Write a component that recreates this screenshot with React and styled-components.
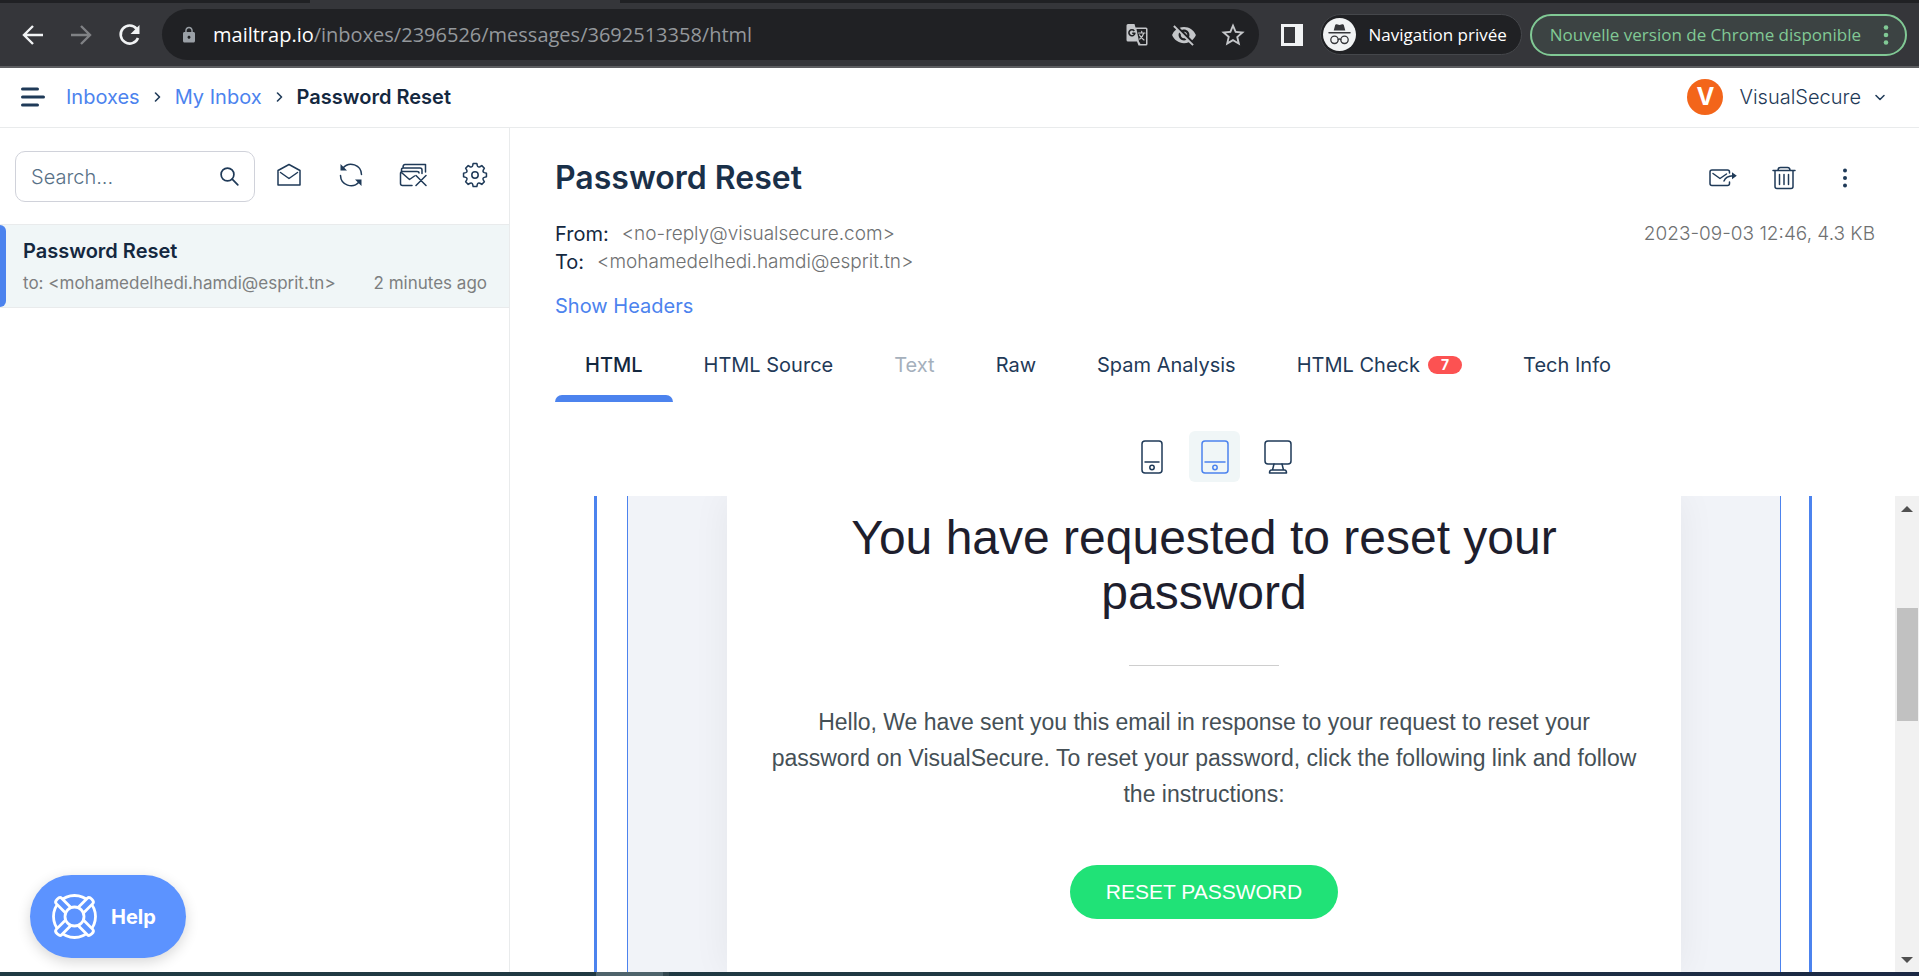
import React from "react";
import styled, { createGlobalStyle, css } from "styled-components";
import { MdLock, MdVisibilityOff, MdStarOutline } from "react-icons/md";

const ui = `Inter, "Liberation Sans", sans-serif`;
const chromeFont = `"Open Sans", "Noto Sans", sans-serif`;
const mailFont = `"Liberation Sans", Arial, sans-serif`;
const navy = "#1f3a58";
const ink = "#14283f";
const blue = "#4c83ee";
const line = "#e9ebec";
const muted = "#7d7f80";

const Global = createGlobalStyle`
  *, *::before, *::after { box-sizing: border-box; }
  body { margin: 0; background: #fff; font-family: ${ui}; color: ${navy}; }
  button { font: inherit; color: inherit; border: 0; background: none; padding: 0; cursor: pointer; }
  a { text-decoration: none; color: ${blue}; }
  svg { display: block; flex: none; }
`;

const Window = styled.div`
  height: 100vh;
  display: flex;
  flex-direction: column;
  overflow: hidden;
`;

/* Browser */
const TabStrip = styled.div`
  flex: none;
  height: 3px;
  display: flex;
  background: #202124;
`;
const ActiveTab = styled.div`
  width: 310px;
  margin-left: 310px;
  background: #35363a;
`;
const BrowserBar = styled.div`
  flex: none;
  height: 65px;
  display: flex;
  align-items: center;
  padding: 0 12px 0 21px;
  background: #35363a;
  border-bottom: 2px solid #5d5e61;
  font-family: ${chromeFont};
`;
const NavButtons = styled.div`
  display: flex;
  gap: 24px;
  margin-right: 21px;
`;
const NavButton = styled.button`
  color: ${(p) => (p.disabled ? "#808285" : "#f1f3f4")};
`;
const Omnibox = styled.div`
  flex: 1;
  min-width: 0;
  height: 51px;
  display: flex;
  align-items: center;
  padding: 0 12px 0 18px;
  border-radius: 26px;
  background: #202124;
  color: #9aa0a6;
`;
const Address = styled.div`
  flex: 1;
  min-width: 0;
  margin-left: 15px;
  font-size: 20px;
  line-height: 28px;
  white-space: nowrap;
  overflow: hidden;
  color: #94989c;
  b { font-weight: 400; color: #fff; }
`;
const OmniActions = styled.div`
  display: flex;
  align-items: center;
  gap: 22px;
  color: #c4c6c9;
`;
const PanelButton = styled.button`
  width: 22px;
  height: 22px;
  margin: 0 17px 0 22px;
  border: solid #f1f3f4;
  border-width: 3px 8px 3px 3px;
`;
const Incognito = styled.div`
  height: 41px;
  display: flex;
  align-items: center;
  gap: 12px;
  padding: 0 14px 0 2px;
  margin-right: 8px;
  border: 1px solid #45474b;
  border-radius: 21px;
  background: #202124;
  color: #fff;
  font-size: 17px;
  line-height: 24px;
  white-space: nowrap;
`;
const UpdateButton = styled.button`
  height: 42px;
  display: flex;
  align-items: center;
  gap: 22px;
  padding: 0 16px 0 18px;
  border: 2px solid #81c995;
  border-radius: 21px;
  background: #3c4343;
  color: #81c995;
  font-size: 17px;
  line-height: 24px;
  white-space: nowrap;
`;

/* App header */
const Header = styled.header`
  flex: none;
  height: 60px;
  display: flex;
  align-items: center;
  padding: 0 34px 1px 20px;
  border-bottom: 1px solid ${line};
  font-size: 20px;
  line-height: 28px;
`;
const Crumbs = styled.nav`
  display: flex;
  align-items: center;
  gap: 14px;
  margin-left: 20px;
  strong { font-weight: 600; color: ${ink}; }
`;
const Account = styled.button`
  display: flex;
  align-items: center;
  margin-left: auto;
`;
const Avatar = styled.span`
  width: 36px;
  height: 36px;
  display: grid;
  place-items: center;
  margin-right: 16px;
  border-radius: 50%;
  background: #f3651a;
  color: #fff;
  font-size: 24px;
  font-weight: 700;
`;
const AccountName = styled.span`
  margin-right: 14px;
  font-weight: 300;
`;

/* Layout */
const Body = styled.div`
  flex: 1;
  min-height: 0;
  display: flex;
`;
const Sidebar = styled.aside`
  flex: none;
  width: 510px;
  display: flex;
  flex-direction: column;
  border-right: 1px solid ${line};
`;
const Tools = styled.div`
  display: flex;
  gap: 20px;
  padding: 23px 20px 22px 15px;
`;
const ToolIcons = styled.div`
  display: flex;
  gap: 34px;
  padding-top: 10px;
`;
const ToolButton = styled.button`
  width: 28px;
  height: 28px;
  display: grid;
  place-items: center;
`;
const SearchBox = styled.label`
  flex: 1;
  min-width: 0;
  height: 51px;
  display: flex;
  align-items: center;
  padding: 0 15px;
  border: 1px solid #d0d2da;
  border-radius: 10px;
`;
const SearchInput = styled.input`
  flex: 1;
  min-width: 0;
  padding: 0;
  border: 0;
  outline: 0;
  background: none;
  font: 300 20px/28px ${ui};
  &::placeholder { color: #587187; opacity: 1; }
`;
const MessageRow = styled.div`
  display: flex;
  background: #f0f6f7;
  border: solid ${line};
  border-width: 1px 0;
`;
const MessageMark = styled.span`
  flex: none;
  width: 6px;
  border-radius: 0 6px 6px 0;
  background: ${blue};
`;
const MessageLink = styled.a`
  flex: 1;
  min-width: 0;
  padding: 12px 22px 11px 17px;
`;
const MessageTitle = styled.div`
  font-size: 20px;
  line-height: 28px;
  font-weight: 600;
  color: ${ink};
`;
const MessageMeta = styled.div`
  display: flex;
  justify-content: space-between;
  margin-top: 5px;
  font-size: 17px;
  line-height: 26px;
  color: ${muted};
`;
const HelpButton = styled.button`
  width: 156px;
  height: 83px;
  display: flex;
  align-items: center;
  gap: 14px;
  margin: auto 0 14px 30px;
  padding-left: 22px;
  border-radius: 42px;
  background: #5c93ff;
  box-shadow: 0 4px 14px rgba(0, 0, 0, 0.16);
  color: #fff;
  font-size: 20px;
  font-weight: 700;
`;

const Main = styled.main`
  flex: 1;
  min-width: 0;
  display: flex;
  flex-direction: column;
`;
const Details = styled.section`
  padding: 28px 44px 0 45px;
`;
const Spread = styled.div`
  display: flex;
  justify-content: space-between;
`;
const Title = styled.h1`
  margin: 0;
  font-size: 32px;
  line-height: 44px;
  font-weight: 600;
  color: #1a3049;
`;
const Actions = styled.div`
  display: flex;
  align-items: center;
  gap: 33px;
  padding-right: 16px;
`;
const Fields = styled.dl`
  margin: 20px 0 0;
  font-size: 20px;
  line-height: 28px;
`;
const Field = styled.div`
  display: flex;
  gap: 13px;
  dt { color: ${ink}; }
  dd { margin: 0; font-size: 19px; font-weight: 300; color: #6f7172; }
`;
const Stamp = styled.div`
  margin-top: 20px;
  font-size: 19px;
  line-height: 28px;
  font-weight: 300;
  color: #6f7172;
`;
const HeadersLink = styled.a`
  display: inline-block;
  margin-top: 16px;
  font-size: 20px;
  line-height: 28px;
`;
const Tabs = styled.nav`
  display: flex;
  gap: 1px;
  margin-top: 31px;
  padding-left: 45px;
`;
const Tab = styled.button`
  display: flex;
  align-items: center;
  gap: 8px;
  height: 44px;
  padding: 0 30px 16px;
  font-size: 20px;
  line-height: 28px;
  white-space: nowrap;
  color: ${navy};
  &:disabled { color: #a5b0bc; }
`;
const TabItem = styled.div`
  &::after {
    content: "";
    display: block;
    height: 7px;
    border-radius: 7px 7px 0 0;
    background: ${(p) => (p.$active ? blue : "transparent")};
  }
  ${(p) => p.$active && css`${Tab} { color: ${ink}; font-weight: 500; }`}
`;
const Badge = styled.span`
  padding: 0 13px;
  border-radius: 9px;
  background: #fc5252;
  color: #fff;
  font-size: 14px;
  line-height: 18px;
  font-weight: 700;
`;
const Devices = styled.div`
  display: flex;
  justify-content: center;
  gap: 12px;
  margin: 29px 0 14px;
`;
const Device = styled.button`
  width: 51px;
  height: 51px;
  display: grid;
  place-items: center;
  border-radius: 6px;
  color: ${(p) => (p.$active ? blue : navy)};
  background: ${(p) => (p.$active ? "#f0f6f7" : "none")};
`;

/* Mail preview */
const Preview = styled.section`
  flex: 1;
  min-height: 0;
  display: flex;
`;
const Viewport = styled.div`
  flex: 1;
  min-width: 0;
  display: flex;
  padding: 0 83px 0 84px;
`;
const Frame = styled.div`
  flex: 1;
  display: flex;
  padding: 0 28px 0 30px;
  border: solid ${blue};
  border-width: 0 3px;
`;
const MailPage = styled.div`
  flex: 1;
  display: flex;
  justify-content: center;
  overflow: hidden;
  border: solid ${blue};
  border-width: 0 1px;
  background: #f1f3f8;
`;
const MailCard = styled.article`
  width: 954px;
  padding: 14px 42px 0;
  background: #fff;
  box-shadow: 0 0 36px rgba(0, 0, 0, 0.06);
  font-family: ${mailFont};
  text-align: center;
`;
const MailTitle = styled.h2`
  margin: 0;
  font-size: 48px;
  line-height: 55px;
  font-weight: 400;
  color: #1e1e2d;
`;
const Rule = styled.hr`
  width: 150px;
  margin: 45px auto 38px;
  border: 0;
  border-top: 1px solid #cecece;
`;
const MailText = styled.p`
  margin: 0;
  font-size: 23px;
  line-height: 36px;
  color: #455056;
`;
const ResetLink = styled.a`
  display: inline-block;
  margin-top: 53px;
  padding: 0 36px;
  border-radius: 27px;
  background: #20e277;
  color: #fff;
  font-size: 21px;
  line-height: 54px;
`;
const Scrollbar = styled.div`
  flex: none;
  width: 24px;
  display: flex;
  flex-direction: column;
  align-items: center;
  padding: 10px 0 9px;
  background: #f1f1f1;
`;
const Thumb = styled.div`
  width: 21px;
  height: 113px;
  margin: 96px 0 auto;
  background: #c1c1c1;
`;
const Taskbar = styled.footer`
  flex: none;
  height: 4px;
  display: flex;
  background: linear-gradient(90deg, #203a43, #1f3842 50%, #1b2844);
`;
const TaskbarApp = styled.div`
  width: 73px;
  margin-left: 596px;
  border-right: 6px solid #33474f;
  background: #4e636b;
`;

function Icon({ w = 24, h = w, sw = 2, children, ...rest }) {
  return (
    <svg width={w} height={h} viewBox={`0 0 ${w} ${h}`} fill="none" stroke="currentColor"
      strokeWidth={sw} strokeLinecap="round" strokeLinejoin="round" aria-hidden="true" {...rest}>
      {children}
    </svg>
  );
}

const Chevron = () => (
  <Icon w={7} h={10} sw={1.6}><path d="M1.5 1 5.5 5l-4 4" /></Icon>
);

/* Eight-toothed gear outline, centred on (13, 13) */
const gearPath = (() => {
  const pts = [];
  for (let i = 0; i < 8; i += 1) {
    const a = (i * Math.PI) / 4;
    const p = (r, d) => `${(13 + r * Math.cos(a + d)).toFixed(2)} ${(13 + r * Math.sin(a + d)).toFixed(2)}`;
    pts.push(`${i ? "L" : "M"}${p(11.6, -0.16)}L${p(11.6, 0.16)}L${p(9.6, 0.25)}Q${p(8, 0.39)} ${p(9.6, 0.535)}`);
  }
  return `${pts.join("")}Z`;
})();

const tabs = [
  { label: "HTML", active: true },
  { label: "HTML Source" },
  { label: "Text", disabled: true },
  { label: "Raw" },
  { label: "Spam Analysis" },
  { label: "HTML Check", count: 7 },
  { label: "Tech Info" },
];

function TranslateIcon() {
  return (
    <Icon w={24} sw={1.5}>
      <path d="M3 1h6.500l1 3.500H21q1.500 0 1.500 1.500v15q0 1.500-1.500 1.500h-7.500L12 18.500H3Q1.500 18.500 1.500 17V2.500Q1.500 1 3 1z" fill="currentColor" stroke="none" />
      <path d="M11.500 6H21v15h-5.500l-1.500-2.500z" fill="#202124" stroke="none" />
      <path d="M9.300 7.900A3 3 0 1 0 9.900 10.200H7.200" stroke="#202124" strokeWidth="1.600" strokeLinecap="butt" />
      <path d="M13.500 10h6.500M16.700 8.300V10M18.800 10q-1 3.500-4 6M14.500 12q1.500 3 4.500 5" strokeWidth="1.200" />
    </Icon>
  );
}

function Browser() {
  return (
    <>
      <TabStrip><ActiveTab /></TabStrip>
      <BrowserBar>
        <NavButtons>
          <NavButton aria-label="Back"><Icon sw={2.4}><path d="M22 12H4M12 3 3 12l9 9" strokeLinecap="butt" strokeLinejoin="miter" /></Icon></NavButton>
          <NavButton aria-label="Forward" disabled><Icon sw={2.4}><path d="M2 12h18M12 3l9 9-9 9" strokeLinecap="butt" strokeLinejoin="miter" /></Icon></NavButton>
          <NavButton aria-label="Reload"><Icon sw={2.6}><path d="M19.600 5.800A9 9 0 1 0 21 15" strokeLinecap="butt" /><path d="M22.500 2v9h-9z" fill="currentColor" stroke="none" /></Icon></NavButton>
        </NavButtons>
        <Omnibox>
          <MdLock size={18} />
          <Address><b>mailtrap.io</b>/inboxes/2396526/messages/3692513358/html</Address>
          <OmniActions>
            <TranslateIcon />
            <MdVisibilityOff size={26} />
            <MdStarOutline size={28} />
          </OmniActions>
        </Omnibox>
        <PanelButton aria-label="Side panel" />
        <Incognito>
          <Icon w={33} stroke="none">
            <circle cx="16.500" cy="16.500" r="16.500" fill="#f1f3f4" />
            <path d="M12.200 7q.4-1 1.600-.7l2.700.8 2.700-.8q1.200-.3 1.600.7l1.500 5.500H10.700z" fill="#35363a" />
            <path d="M6 14.800h21" stroke="#35363a" strokeWidth="1.500" />
            <g stroke="#35363a" strokeWidth="1.300"><circle cx="11.500" cy="21.800" r="3.700" /><circle cx="21.500" cy="21.800" r="3.700" /><path d="M15.200 21.500q1.300-1 2.600 0" /></g>
          </Icon>
          Navigation privée
        </Incognito>
        <UpdateButton>
          Nouvelle version de Chrome disponible
          <Icon w={6} h={20} fill="currentColor" stroke="none"><circle cx="3" cy="2.500" r="2.300" /><circle cx="3" cy="10" r="2.300" /><circle cx="3" cy="17.500" r="2.300" /></Icon>
        </UpdateButton>
      </BrowserBar>
    </>
  );
}

function Tool({ label, children }) {
  return <ToolButton aria-label={label} title={label}>{children}</ToolButton>;
}

function SidePanel() {
  return (
    <Sidebar>
      <Tools>
        <SearchBox>
          <SearchInput placeholder="Search..." aria-label="Search" />
          <Icon w={19} sw={1.7}><circle cx="7.500" cy="7.500" r="6.400" /><path d="m12.200 12.200 5.600 5.600" /></Icon>
        </SearchBox>
        <ToolIcons>
          <Tool label="Mark all as read"><Icon w={26} sw={1.5}><path d="M2 8.500 13 2.500l11 6V23H2zM4.500 10.500l8.500 6 8.500-6" /></Icon></Tool>
          <Tool label="Refresh"><Icon w={26} sw={1.5}><path d="M5 6A10.500 10.500 0 0 1 23.500 12.500M21 20A10.500 10.500 0 0 1 2.500 13.500" /><path d="M2.500 2v6.500H9zM23.500 24v-6.500H17z" fill="currentColor" stroke="none" /></Icon></Tool>
          <Tool label="Delete all messages"><Icon w={28} h={24} sw={1.5}><path d="M13 22.500H3.500Q1.500 22.500 1.500 20.500V10.500Q1.500 8.500 3.500 8.500H18Q20 8.500 20 10M2.500 9.500l8 7 5-3.500M2.500 8V6.500Q2.500 5 4.500 5H21q2 0 2 2v3.500M4 4.500Q4 1.500 6 1.500H26.500V9M17 12.500l10 10M27 12.500l-10 10" /></Icon></Tool>
          <Tool label="Settings"><Icon w={26} sw={1.5}><path d={gearPath} /><circle cx="13" cy="13" r="3.200" /></Icon></Tool>
        </ToolIcons>
      </Tools>
      <MessageRow>
        <MessageMark />
        <MessageLink href="#message">
          <MessageTitle>Password Reset</MessageTitle>
          <MessageMeta><span>to: &lt;mohamedelhedi.hamdi@esprit.tn&gt;</span><span>2 minutes ago</span></MessageMeta>
        </MessageLink>
      </MessageRow>
      <HelpButton>
        <Icon w={45} sw={2.8} stroke="#fff">
          <circle cx="22.500" cy="22.500" r="21" />
          {[45, 135, 225, 315].map((r) => (
            <path key={r} transform={`rotate(${r} 22.500 22.500)`} fill="#5c93ff" d="M18.700 14V.500q0-2.500 3.800-2.500t3.800 2.500V14" />
          ))}
          <circle cx="22.500" cy="22.500" r="9.500" fill="#5c93ff" />
        </Icon>
        Help
      </HelpButton>
    </Sidebar>
  );
}

function MessageView() {
  return (
    <Main>
      <Details>
        <Spread>
          <Title>Password Reset</Title>
          <Actions>
            <Tool label="Forward"><Icon w={28} h={18} sw={1.5}><path d="M20.500 4V3Q20.500 1 18.500 1H3Q1 1 1 3v11.500q0 2 2 2h15.500q2 0 2-2V13M4 4.500l7 5 6.500-4.500M15 12q2-5 9-5.300" /><path d="m23 3.200 4.800 3.500L23 10.200z" fill="currentColor" stroke="none" /></Icon></Tool>
            <Tool label="Delete"><Icon w={24} sw={1.5}><path d="M1 4.500h22M6 4.500q0-3 2.500-3h7q2.500 0 2.500 3M3 4.500V20.500q0 2 2 2H19q2 0 2-2V4.500M7.500 8.500v10M12 8.500v10M16.500 8.500v10" /></Icon></Tool>
            <Tool label="More"><Icon w={4} h={20} fill="currentColor" stroke="none"><circle cx="2" cy="2.500" r="2" /><circle cx="2" cy="10" r="2" /><circle cx="2" cy="17.500" r="2" /></Icon></Tool>
          </Actions>
        </Spread>
        <Spread>
          <Fields>
            <Field><dt>From:</dt><dd>&lt;no-reply@visualsecure.com&gt;</dd></Field>
            <Field><dt>To:</dt><dd>&lt;mohamedelhedi.hamdi@esprit.tn&gt;</dd></Field>
          </Fields>
          <Stamp>2023-09-03 12:46, 4.3 KB</Stamp>
        </Spread>
        <HeadersLink href="#headers">Show Headers</HeadersLink>
      </Details>
      <Tabs>
        {tabs.map((t) => (
          <TabItem key={t.label} $active={t.active}>
            <Tab disabled={t.disabled}>{t.label}{t.count && <Badge>{t.count}</Badge>}</Tab>
          </TabItem>
        ))}
      </Tabs>
      <Devices>
        <Device aria-label="Phone"><Icon w={22} h={34} sw={1.5}><rect x="1" y="1" width="20" height="32" rx="3" /><path d="M4 22h14" /><circle cx="11" cy="27.500" r="2.200" /></Icon></Device>
        <Device aria-label="Tablet" $active><Icon w={28} h={34} sw={1.5}><rect x="1" y="1" width="26" height="32" rx="3" /><path d="M4 22h20" /><circle cx="14" cy="27.500" r="2.200" /></Icon></Device>
        <Device aria-label="Desktop"><Icon w={28} h={34} sw={1.5}><rect x="1" y="1" width="26" height="23" rx="3" /><path d="M10 24 8.500 30M18 24l1.500 6M7.500 30h13q2 0 2 3h-17q0-3 2-3z" /></Icon></Device>
      </Devices>
      <Preview>
        <Viewport>
          <Frame>
            <MailPage>
              <MailCard>
                <MailTitle>You have requested to reset your password</MailTitle>
                <Rule />
                <MailText>Hello, We have sent you this email in response to your request to reset your password on VisualSecure. To reset your password, click the following link and follow the instructions:</MailText>
                <ResetLink href="#reset">RESET PASSWORD</ResetLink>
              </MailCard>
            </MailPage>
          </Frame>
        </Viewport>
        <Scrollbar>
          <Icon w={12} h={6} fill="#505050" stroke="none"><path d="M0 6 6 0l6 6z" /></Icon>
          <Thumb />
          <Icon w={12} h={6} fill="#505050" stroke="none"><path d="m0 0 6 6 6-6z" /></Icon>
        </Scrollbar>
      </Preview>
    </Main>
  );
}

export default function App() {
  return (
    <Window>
      <Global />
      <Browser />
      <Header>
        <button aria-label="Menu"><Icon w={26} h={20} sw={3}><path d="M2.500 2h15M2.500 10h21M2.500 18h15" /></Icon></button>
        <Crumbs aria-label="Breadcrumb">
          <a href="#inboxes">Inboxes</a>
          <Chevron />
          <a href="#my-inbox">My Inbox</a>
          <Chevron />
          <strong>Password Reset</strong>
        </Crumbs>
        <Account>
          <Avatar>V</Avatar>
          <AccountName>VisualSecure</AccountName>
          <Icon w={10} h={7} sw={1.5}><path d="m1 1.500 4 4 4-4" /></Icon>
        </Account>
      </Header>
      <Body>
        <SidePanel />
        <MessageView />
      </Body>
      <Taskbar><TaskbarApp /></Taskbar>
    </Window>
  );
}
